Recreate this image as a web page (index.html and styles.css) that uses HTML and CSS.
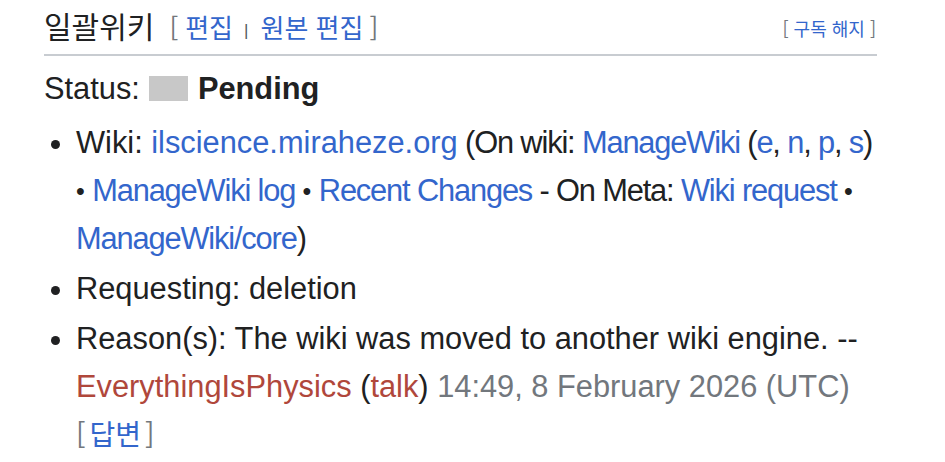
FILE: index.html
```html
<!DOCTYPE html>
<html lang="ko">
<head>
<meta charset="utf-8">
<link rel="stylesheet" href="styles.css">
</head>
<body>
<div class="page">
  <div class="heading">
    <h2 class="title-line"><span class="title">일괄위키</span><span class="editsection"><span class="br">[</span><a href="#">편집</a><span class="sep">|</span><a href="#">원본 편집</a><span class="br">]</span></span></h2>
    <span class="subscribe"><span class="br">[</span> <a href="#">구독 해지</a> <span class="br">]</span></span>
  </div>
  <p class="status">Status: <span class="box"></span> <b>Pending</b></p>
  <ul class="items">
    <li>Wiki: <a href="#">ilscience.miraheze.org</a><span class="tpl"> (On wiki: <a href="#">ManageWiki</a> (<a href="#">e</a>, <a href="#">n</a>, <a href="#">p</a>, <a href="#">s</a>) <span class="dot">•</span> <a href="#">ManageWiki log</a> <span class="dot">•</span> <a href="#">Recent Changes</a> - On Meta: <a href="#">Wiki request</a> <span class="dot">•</span> <a href="#">ManageWiki/core</a>)</span></li>
    <li>Requesting: deletion</li>
    <li class="reason">Reason(s): The wiki was moved to another wiki engine. -- <a class="user" href="#">EverythingIsPhysics</a> (<a class="user" href="#">talk</a>) <span class="ts">14:49, 8 February 2026 (UTC)</span><br><span class="reply"><span class="br">[</span><a href="#">답변</a><span class="br">]</span></span></li>
  </ul>
</div>
</body>
</html>
```
FILE: styles.css
```css
html, body {
  margin: 0;
  padding: 0;
  background: #ffffff;
}
body {
  font-family: "Liberation Sans", "Noto Sans CJK KR", sans-serif;
  color: #202122;
}
a {
  color: #3366cc;
  text-decoration: none;
}
.page {
  width: 833px;
  padding: 0 0 0 44px;
}
.heading {
  display: flex;
  align-items: center;
  justify-content: space-between;
  border-bottom: 2px solid #c8ccd1;
  height: 56px;
  box-sizing: border-box;
  padding: 8px 0 6px 0;
}
.title-line {
  margin: 0;
  font-weight: normal;
  display: flex;
  align-items: baseline;
  line-height: 40px;
}
.title {
  font-family: "Noto Sans CJK KR", sans-serif;
  font-size: 30px;
  color: #202122;
}
.editsection {
  font-family: "Noto Sans CJK KR", sans-serif;
  font-size: 26px;
  margin-left: 15px;
}
.br {
  color: #72777d;
}
.editsection .br:first-child {
  margin-right: 7px;
}
.editsection .br:last-child {
  margin-left: 6px;
}
.sep {
  color: #54595d;
  font-family: "Liberation Sans", sans-serif;
  font-size: 17px;
  vertical-align: 2px;
  margin: 0 12px 0 11px;
}
.subscribe {
  font-family: "Noto Sans CJK KR", sans-serif;
  font-size: 18px;
  line-height: 40px;
  margin-right: 1px;
}
.status {
  margin: 9px 0 0 0;
  font-size: 30.8px;
  line-height: 47px;
  display: flex;
  align-items: center;
}
.box {
  display: inline-block;
  width: 39px;
  height: 25px;
  background: #c8c8c8;
  margin: 0 10px 0 9px;
}
.status b {
  font-weight: bold;
}
.items {
  margin: 7px 0 0 0;
  padding: 0 0 0 32px;
  font-size: 30.8px;
  line-height: 47.5px;
}
.items li {
  margin-bottom: 2px;
}
.items li.reason {
  margin-top: 3px;
}
.tpl {
  letter-spacing: -1.15px;
}
.dot {
  font-size: 25px;
  vertical-align: 1px;
  letter-spacing: 0;
  color: #202122;
}
.user {
  color: #b0473b;
}
.ts {
  color: #72777d;
}
.reply {
  font-family: "Noto Sans CJK KR", "Liberation Sans", sans-serif;
  font-size: 28px;
}
.reply .br:first-child {
  margin-right: 4px;
}
.reply .br:last-child {
  margin-left: 4px;
}
```
